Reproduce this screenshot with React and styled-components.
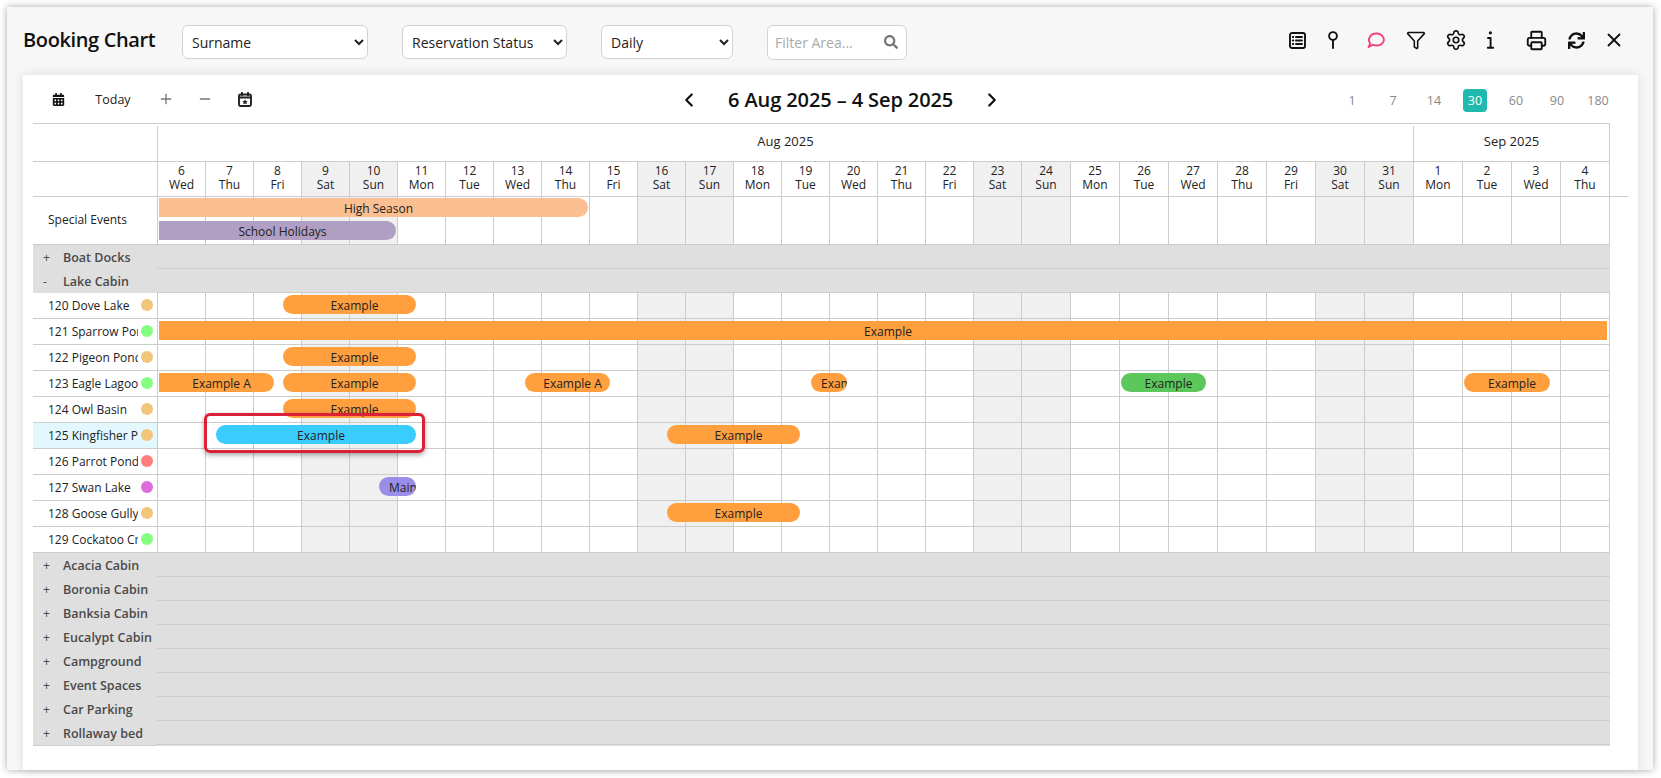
import React from 'react';
import styled, { createGlobalStyle } from 'styled-components';
import { ChevronLeft, ChevronRight, Funnel, Minus, Plus, Printer, Settings, X } from 'lucide-react';
import { FaCalendarAlt, FaSearch, FaSync } from 'react-icons/fa';

const DAY_NAMES = ['Sun', 'Mon', 'Tue', 'Wed', 'Thu', 'Fri', 'Sat'];

// 6 Aug 2025 is a Wednesday, the chart runs for 30 days
const days = Array.from({ length: 30 }, (_, i) => {
  const weekday = (3 + i) % 7;
  return {
    num: i < 26 ? i + 6 : i - 25,
    name: DAY_NAMES[weekday],
    weekend: weekday === 0 || weekday === 6
  };
});

const COLUMNS = 'repeat(18, 48px) repeat(12, 49px)';

const rooms = [
  { name: '120 Dove Lake', dot: '#f2c57c', bars: [{ from: 283, to: 416, text: 'Example' }] },
  { name: '121 Sparrow Pond', dot: '#85ff7f', bars: [{ from: 159, to: 1607, text: 'Example', square: true }] },
  { name: '122 Pigeon Pond', dot: '#f2c57c', bars: [{ from: 283, to: 416, text: 'Example' }] },
  {
    name: '123 Eagle Lagoon',
    dot: '#85ff7f',
    bars: [
      { from: 159, to: 274, text: 'Example A', flatLeft: true },
      { from: 283, to: 416, text: 'Example' },
      { from: 525, to: 610, text: 'Example A' },
      { from: 811, to: 847, text: 'Example' },
      { from: 1121, to: 1206, text: 'Example', color: '#5cc85c' },
      { from: 1464, to: 1550, text: 'Example' }
    ]
  },
  { name: '124 Owl Basin', dot: '#f2c57c', bars: [{ from: 283, to: 416, text: 'Example' }] },
  {
    name: '125 Kingfisher Pond',
    dot: '#f2c57c',
    selected: true,
    bars: [
      { from: 216, to: 416, text: 'Example', color: '#3accfd' },
      { from: 667, to: 800, text: 'Example' }
    ]
  },
  { name: '126 Parrot Pond', dot: '#ff7f7f', bars: [] },
  { name: '127 Swan Lake', dot: '#dd6bdc', bars: [{ from: 379, to: 416, text: 'Maintenance', color: '#9b8ee8' }] },
  { name: '128 Goose Gully', dot: '#f2c57c', bars: [{ from: 667, to: 800, text: 'Example' }] },
  { name: '129 Cockatoo Creek', dot: '#85ff7f', bars: [] }
];

const closedGroups = ['Acacia Cabin', 'Boronia Cabin', 'Banksia Cabin', 'Eucalypt Cabin', 'Campground', 'Event Spaces', 'Car Parking', 'Rollaway bed'];

const GlobalStyle = createGlobalStyle`
  html, body {
    margin: 0;
    padding: 0;
    background: #fff;
    font-family: 'Open Sans', 'Liberation Sans', sans-serif;
    color: #222;
  }
  * { box-sizing: border-box; }
`;

const Page = styled.div`
  width: 1661px;
  height: 778px;
  padding: 7px 8px 8px 7px;
`;

const Win = styled.div`
  height: 100%;
  display: flex;
  flex-direction: column;
  background: #f7f7f8;
  box-shadow: 0 0 7px rgba(0, 0, 0, 0.35);
`;

const Header = styled.header`
  height: 68px;
  flex: none;
  display: flex;
  align-items: flex-start;
  padding: 18px 27px 0 16px;
`;

const Title = styled.h1`
  width: 159px;
  margin: 0;
  font-size: 20px;
  line-height: 30px;
  font-weight: 600;
  color: #111;
  letter-spacing: -0.37px;
`;

const Select = styled.select`
  width: ${p => p.$w}px;
  height: 34px;
  margin-right: 34px;
  padding: 1px 4px 0 5px;
  background-color: #fff;
  border: 1px solid #d2d2d2;
  border-radius: 6px;
  font-family: inherit;
  font-size: 14px;
  color: #222;
`;

const SearchBox = styled.div`
  position: relative;
  width: 140px;
  height: 35px;
`;

const SearchInput = styled.input`
  width: 100%;
  height: 100%;
  padding: 0 30px 0 7px;
  background: #fff;
  border: 1px solid #d2d2d2;
  border-radius: 6px;
  font-family: inherit;
  font-size: 14px;
  &::placeholder { color: #aaa; }
`;

const SearchGlyph = styled(FaSearch)`
  position: absolute;
  top: 10px;
  right: 9px;
  font-size: 14px;
  color: #777;
`;

const HeaderIcons = styled.div`
  margin-left: auto;
  height: 30px;
  display: flex;
  align-items: center;
`;

const HeaderIcon = styled.span`
  width: 24px;
  height: 24px;
  margin-left: ${p => p.$gap}px;
  display: flex;
  align-items: center;
  justify-content: center;
  color: ${p => p.$color || '#111'};
`;

const Panel = styled.main`
  flex: 1;
  margin: 0 15px 0 16px;
  background: #fff;
  box-shadow: 0 0 10px rgba(30, 30, 60, 0.12);
`;

const Toolbar = styled.div`
  height: 48px;
  display: grid;
  grid-template-columns: 640px auto 1fr;
  align-items: center;
  padding: 2px 28px 0 15px;
`;

const ToolGroup = styled.div`
  display: flex;
  align-items: center;
  margin-top: -2px;
`;

const ToolButton = styled.div`
  width: ${p => p.$w}px;
  display: flex;
  justify-content: center;
  font-size: 12.5px;
  color: ${p => p.$color || '#222'};
`;

const DateNav = styled.div`
  display: flex;
  align-items: center;
  gap: 28px;
  color: #111;
`;

const DateRange = styled.div`
  font-size: 20px;
  font-weight: 600;
  line-height: 26px;
  letter-spacing: -0.1px;
`;

const Periods = styled.div`
  display: flex;
  justify-content: flex-end;
  gap: 17px;
`;

const Period = styled.div`
  width: 24px;
  height: 23px;
  border-radius: 4px;
  text-align: center;
  font-size: 12.5px;
  line-height: 23px;
  color: ${p => (p.$active ? '#fff' : '#888')};
  background: ${p => (p.$active ? '#1fb9ad' : 'transparent')};
`;

const Chart = styled.div`
  margin-left: 10px;
  font-size: 12px;
  width: 1595px;
`;

const MonthRow = styled.div`
  width: 1577px;
  height: 39px;
  display: flex;
  border-top: 1px solid #ccc;
  border-bottom: 1px solid #ccc;
  border-right: 1px solid #ccc;
`;

const Corner = styled.div`
  width: 124px;
  flex: none;
`;

const Month = styled.div`
  width: ${p => p.$w}px;
  margin-top: 2px;
  border-left: 1px solid #ccc;
  text-align: center;
  font-size: 13px;
  line-height: 30px;
  color: #222;
`;

const DayRow = styled.div`
  height: 35px;
  display: flex;
  border-bottom: 1px solid #ccc;
`;

const DayGrid = styled.div`
  display: grid;
  grid-template-columns: ${COLUMNS};
  border-right: 1px solid #ccc;
`;

const DayCell = styled.div`
  border-left: 1px solid #ccc;
  background: ${p => (p.$weekend ? '#f0f0f0' : '#fff')};
  text-align: center;
  line-height: 14px;
  padding-top: 2px;
  color: #222;
`;

const Row = styled.div`
  width: 1577px;
  height: ${p => p.$h}px;
  display: flex;
`;

const RowLabel = styled.div`
  width: 124px;
  flex: none;
  display: flex;
  align-items: center;
  padding-left: 15px;
  padding-bottom: ${p => (p.$raised ? 2 : 0)}px;
  border-bottom: 1px solid #ccc;
  background: ${p => (p.$selected ? '#e3f8fe' : '#fff')};
`;

const RoomName = styled.span`
  width: 90px;
  flex: none;
  overflow: hidden;
  white-space: nowrap;
`;

const Dot = styled.span`
  width: 12px;
  height: 12px;
  margin-left: 3px;
  margin-top: -1px;
  border-radius: 50%;
  background: ${p => p.$color};
`;

const Timeline = styled.div`
  position: relative;
  flex: 1;
  display: grid;
  grid-template-columns: ${COLUMNS};
  border-right: 1px solid #ccc;
  border-bottom: 1px solid #ccc;
`;

const Cell = styled.div`
  border-left: 1px solid #ccc;
  background: ${p => (p.$weekend ? '#f0f0f0' : '#fff')};
`;

const Bar = styled.div`
  position: absolute;
  top: ${p => p.$top}px;
  left: ${p => p.$left}px;
  width: ${p => p.$width}px;
  height: 19px;
  padding-left: 10px;
  overflow: hidden;
  white-space: nowrap;
  text-align: center;
  line-height: 21px;
  color: #222;
  background: ${p => p.$color};
  border-radius: ${p => p.$radius};
`;

const Marker = styled.div`
  position: absolute;
  z-index: 2;
  top: -10px;
  left: 47px;
  width: 221px;
  height: 40px;
  border: 3px solid #dc2038;
  border-radius: 6px;
  box-shadow: 0 2px 5px rgba(0, 0, 0, 0.35);
`;

const GroupRow = styled.div`
  width: 1577px;
  height: ${p => (p.$last ? 25 : 24)}px;
  display: flex;
  background: #dfdfdf;
`;

const GroupLabel = styled.div`
  width: 124px;
  flex: none;
  display: flex;
  align-items: center;
  font-size: 12.5px;
  font-weight: 600;
  color: #4a4a4a;
  white-space: nowrap;
  border-bottom: ${p => (p.$last ? '1px solid #ccc' : 'none')};
`;

const Toggle = styled.span`
  width: 30px;
  padding-left: 10px;
  font-size: 12px;
  font-weight: 400;
`;

const GroupFill = styled.div`
  flex: 1;
  height: 24px;
  border-bottom: 1px solid #ccc;
`;

const Svg = styled.svg`
  display: block;
  fill: none;
  stroke: currentColor;
  stroke-width: 1.9;
  stroke-linecap: round;
  stroke-linejoin: round;
`;

const ListIcon = () => (
  <Svg width="17" height="17" viewBox="0 0 17 17">
    <rect x="1" y="1" width="15" height="15" rx="2" />
    <path d="M7 5h6M7 8.5h6M7 12h6M3.8 5h.5M3.8 8.5h.5M3.8 12h.5" />
  </Svg>
);

const PinIcon = () => (
  <Svg width="10" height="18" viewBox="0 0 10 18">
    <circle cx="5" cy="5" r="3.9" />
    <path d="M5 9v8" />
  </Svg>
);

const CommentIcon = () => (
  <Svg width="18" height="16" viewBox="0 0 18 16">
    <path d="M1.6 15l1.7-3.4C1.8 9.8 1.5 7.5 2.6 5.4 4 2.7 7 1.2 10.2 1.5c3.6.3 6.6 2.9 6.7 6 .1 3.3-3.1 5.9-6.9 6-1.7 0-3.1-.3-4.2-.6z" />
  </Svg>
);

const InfoIcon = () => (
  <Svg width="7" height="18" viewBox="0 0 7 18">
    <circle cx="3.4" cy="1.8" r="0.7" />
    <path d="M1 7h2.6v9.6M.6 16.8h5.8" />
  </Svg>
);

const CalendarStarIcon = () => (
  <Svg width="14" height="15" viewBox="0 0 14 15">
    <rect x="1" y="2.5" width="12" height="11.5" rx="1.5" />
    <path d="M1 5.5h12M4 .8v2.4M10 .8v2.4" />
    <path d="M7 7.4l.9 1.7 1.8.2-1.3 1.2.3 1.8L7 11.5l-1.7.8.3-1.8-1.3-1.2 1.8-.2z" fill="currentColor" stroke="none" />
  </Svg>
);

const App = () => (
  <Page>
    <GlobalStyle />
    <Win>
      <Header>
        <Title>Booking Chart</Title>
        <Select $w={186} defaultValue="Surname">
          <option>Surname</option>
        </Select>
        <Select $w={165} defaultValue="Reservation Status">
          <option>Reservation Status</option>
        </Select>
        <Select $w={132} defaultValue="Daily">
          <option>Daily</option>
        </Select>
        <SearchBox>
          <SearchInput placeholder="Filter Area..." />
          <SearchGlyph />
        </SearchBox>
        <HeaderIcons>
          <HeaderIcon $gap={0}><ListIcon /></HeaderIcon>
          <HeaderIcon $gap={12}><PinIcon /></HeaderIcon>
          <HeaderIcon $gap={19} $color="#f0447a"><CommentIcon /></HeaderIcon>
          <HeaderIcon $gap={16}><Funnel size={20} strokeWidth={1.9} /></HeaderIcon>
          <HeaderIcon $gap={16}><Settings size={22} strokeWidth={1.8} /></HeaderIcon>
          <HeaderIcon $gap={10}><InfoIcon /></HeaderIcon>
          <HeaderIcon $gap={22}><Printer size={21} strokeWidth={2.1} /></HeaderIcon>
          <HeaderIcon $gap={16}><FaSync size={17} /></HeaderIcon>
          <HeaderIcon $gap={14}><X size={22} strokeWidth={2} /></HeaderIcon>
        </HeaderIcons>
      </Header>
      <Panel>
        <Toolbar>
          <ToolGroup>
            <ToolButton $w={40}><FaCalendarAlt size={13} color="#111" /></ToolButton>
            <ToolButton $w={70}>Today</ToolButton>
            <ToolButton $w={36} $color="#777"><Plus size={16} /></ToolButton>
            <ToolButton $w={42} $color="#777"><Minus size={16} /></ToolButton>
            <ToolButton $w={38} $color="#222"><CalendarStarIcon /></ToolButton>
          </ToolGroup>
          <DateNav>
            <ChevronLeft size={22} strokeWidth={2.4} />
            <DateRange>6 Aug 2025 – 4 Sep 2025</DateRange>
            <ChevronRight size={22} strokeWidth={2.4} />
          </DateNav>
          <Periods>
            {[1, 7, 14, 30, 60, 90, 180].map(n => (
              <Period key={n} $active={n === 30}>{n}</Period>
            ))}
          </Periods>
        </Toolbar>
        <Chart>
          <MonthRow>
            <Corner />
            <Month $w={1256}>Aug 2025</Month>
            <Month $w={196}>Sep 2025</Month>
          </MonthRow>
          <DayRow>
            <Corner />
            <DayGrid>
              {days.map(d => (
                <DayCell key={`${d.num}${d.name}`} $weekend={d.weekend}>
                  {d.num}
                  <br />
                  {d.name}
                </DayCell>
              ))}
            </DayGrid>
          </DayRow>
          <Row $h={48}>
            <RowLabel $raised>Special Events</RowLabel>
            <Timeline>
              {days.map(d => <Cell key={`${d.num}${d.name}`} $weekend={d.weekend} />)}
              <Bar $top={1} $left={2} $width={429} $color="#fbbf91" $radius="0 10px 10px 0">High Season</Bar>
              <Bar $top={24} $left={2} $width={237} $color="#b09fc3" $radius="0 10px 10px 0">School Holidays</Bar>
            </Timeline>
          </Row>
          <GroupRow>
            <GroupLabel><Toggle>+</Toggle>Boat Docks</GroupLabel>
            <GroupFill />
          </GroupRow>
          <GroupRow>
            <GroupLabel><Toggle>-</Toggle>Lake Cabin</GroupLabel>
            <GroupFill />
          </GroupRow>
          {rooms.map(room => (
            <Row key={room.name} $h={26}>
              <RowLabel $selected={room.selected}>
                <RoomName>{room.name}</RoomName>
                <Dot $color={room.dot} />
              </RowLabel>
              <Timeline>
                {days.map(d => <Cell key={`${d.num}${d.name}`} $weekend={d.weekend} />)}
                {room.bars.map(bar => (
                  <Bar
                    key={bar.from}
                    $top={2}
                    $left={bar.from - 157}
                    $width={bar.to - bar.from}
                    $color={bar.color || '#ff9f3e'}
                    $radius={bar.square ? '0' : bar.flatLeft ? '0 10px 10px 0' : '10px'}
                  >
                    {bar.text}
                  </Bar>
                ))}
                {room.selected && <Marker />}
              </Timeline>
            </Row>
          ))}
          {closedGroups.map((name, i) => {
            const last = i === closedGroups.length - 1;
            return (
              <GroupRow key={name} $last={last}>
                <GroupLabel $last={last}><Toggle>+</Toggle>{name}</GroupLabel>
                <GroupFill />
              </GroupRow>
            );
          })}
        </Chart>
      </Panel>
    </Win>
  </Page>
);

export default App;
